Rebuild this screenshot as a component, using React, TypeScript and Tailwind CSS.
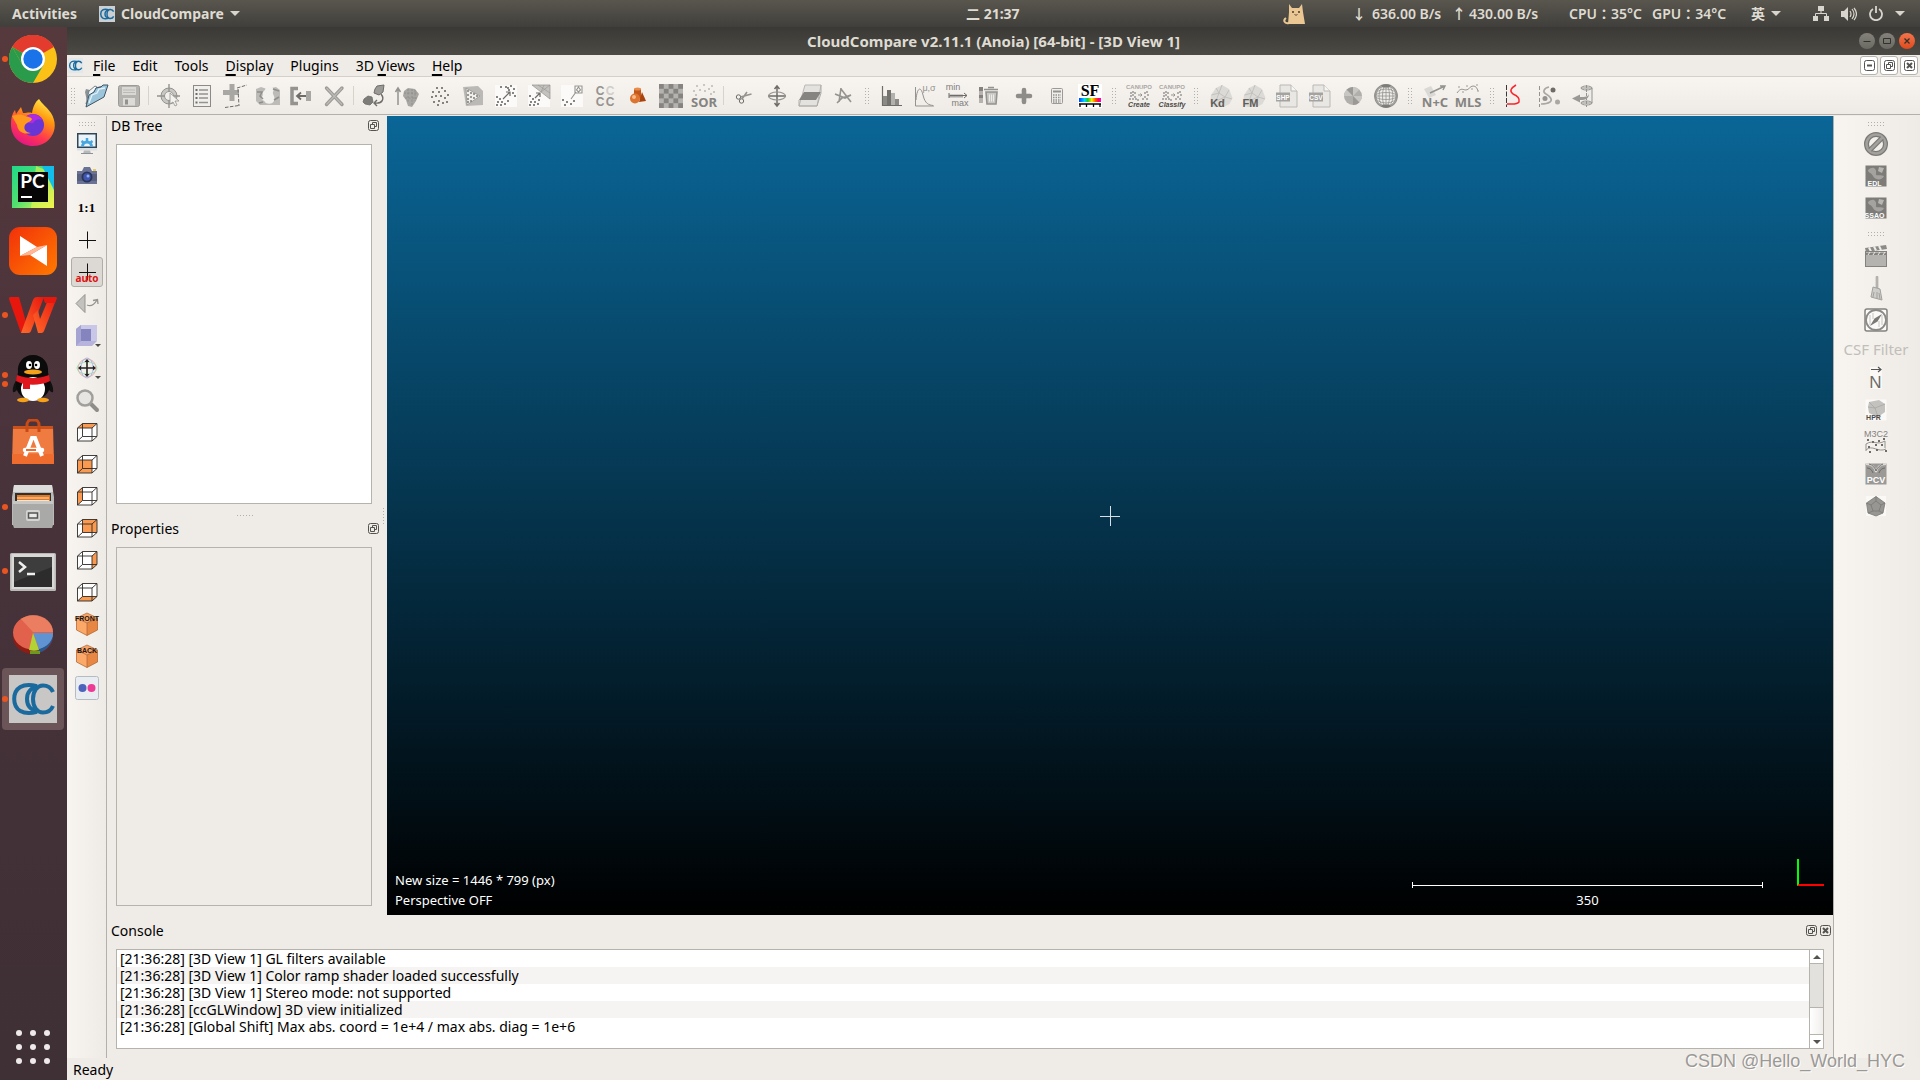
import React from "react";

type Kids = { children?: React.ReactNode };

const G = "#94938f";
const L = "#c9c7c3";
const D = "#6d6c69";

function Ic({ children, size = 24 }: Kids & { size?: number }) {
  return (
    <svg width={size} height={size} viewBox="0 0 24 24" fill="none" aria-hidden="true" className="block shrink-0 overflow-visible">
      {children}
    </svg>
  );
}

function T({ x = 12, y, s, f = G, children, font = "Liberation Sans", w = "bold", i = false }: Kids & { x?: number; y: number; s: number; f?: string; font?: string; w?: string; i?: boolean }) {
  return (
    <text x={x} y={y} fontSize={s} fill={f} textAnchor="middle" fontWeight={w} fontStyle={i ? "italic" : "normal"} fontFamily={`"${font}", sans-serif`}>
      {children}
    </text>
  );
}

function Dots({ pts, r = 1, f = D }: { pts: number[][]; r?: number; f?: string }) {
  return (
    <>
      {pts.map(([x, y], i) => (
        <rect key={i} x={x - r} y={y - r} width={r * 2} height={r * 2} fill={f} />
      ))}
    </>
  );
}

function CCLogo({ size, bg, sw = 2.2 }: { size: number; bg: string; sw?: number }) {
  return (
    <Ic size={size}>
      <rect width="24" height="24" fill={bg} />
      <path d="M14 5.600C7 3.600 2.600 6.500 2.600 12s4.400 8.400 11.400 6.400" stroke="#1b6a9e" strokeWidth={sw} />
      <path d="M14.500 6.500C11 6 9 8.500 9 12s2 6 5.500 5.500" stroke="#1b6a9e" strokeWidth={sw} />
      <path d="M22 8.500C21 6.200 19 5.200 17 5.200c-3 0-5 3-5 6.800s2 6.800 5 6.800c2 0 4-1 5-3.300" stroke="#1b6a9e" strokeWidth={sw} />
    </Ic>
  );
}

/* ---------- top toolbar icons ---------- */

const SCATTER = [[9, 4], [14, 4], [5, 8], [11, 8], [17, 7], [20, 11], [4, 13], [8, 12], [13, 12], [17, 14], [6, 18], [11, 17], [15, 19], [19, 18], [10, 21]];

const Stone = ({ label }: { label: string }) => (
  <Ic>
    <path d="M1 19 2 11 7 4l6-3 7 4 3.500 9-3 6-6 3H5z" fill="#dcdad6" />
    <path d="M7 4l3 5 3-8M2.500 11 10 9l6 4 7 2M16 13l4-7M10 9l-3 8 9-4-2 10" stroke="#bdbbb7" strokeWidth=".8" />
    <T x={8.500} y={23} s={11} f="#5f5e5b">{label}</T>
  </Ic>
);

const FileIc = ({ label }: { label: string }) => (
  <Ic>
    <path d="M5 1h11l6 6v16H5z" fill="#e9e7e3" stroke="#bbb9b5" />
    <path d="M16 1v6h6" fill="#f7f6f3" stroke="#bbb9b5" />
    <rect x="1" y="8.500" width="14" height="9" fill="#a5a3a0" />
    <T x={8} y={15.500} s={6.500} f="#fff">{label}</T>
  </Ic>
);

const Canupo = ({ label }: { label: string }) => (
  <Ic>
    <T y={5} s={6} f="#a8a6a3">CANUPO</T>
    <Dots pts={[[4, 9], [6, 8], [8, 9], [4, 12], [6, 11], [8, 13], [3, 15], [6, 15], [9, 15], [11, 16], [18, 9], [20, 8], [21, 11], [18, 13], [16, 15], [20, 15]]} r={0.8} f="#8b8a87" />
    <path d="M11 11h4m-1.500-1.500L15 11l-1.500 1.500" stroke={G} />
    <T y={22.500} s={7} f="#4a4947" i>{label}</T>
  </Ic>
);

const I: Record<string, React.ReactNode> = {
  Open: (
    <Ic>
      <path d="M1 8 2 5l4 1 5-4 2 1 8-2 2 1-3 9L4 22z" fill="#8a9297" />
      <path d="M2 20 5 7l6-5 2 1-6 10z" fill="#f2f6f8" stroke="#5c6468" strokeWidth=".7" />
      <path d="M2 23 5 11l5-3 2-4 5-1 2-2h5l-4 12z" fill="#9cc5dc" stroke="#3d5563" strokeWidth="1" />
      <path d="M5 19 8 11l5-2 2-4 6-1" stroke="#e4f2f9" strokeWidth="1.300" />
    </Ic>
  ),
  Save: (
    <Ic>
      <rect x="1.500" y="1.500" width="21" height="21" rx="2" fill="#b5b3b0" stroke="#9d9b98" />
      <rect x="5" y="3" width="14" height="8" fill="#dad8d4" />
      <path d="M6 6h12M6 8.500h12" stroke="#bcbab6" />
      <rect x="6" y="14" width="12" height="7.500" fill="#dddbd8" />
      <rect x="8" y="15.500" width="3" height="5" fill="#94928f" />
    </Ic>
  ),
  "Pick point": (
    <Ic>
      <circle cx="12" cy="12" r="6" stroke={L} strokeWidth="4" />
      <circle cx="12" cy="12" r="8" stroke={G} />
      <circle cx="12" cy="12" r="4.500" stroke={G} strokeWidth=".8" />
      <path d="M12 0v8M12 16v8M0 12h8M16 12h7" stroke={G} strokeWidth="1.400" />
      <path d="M13 9v11l3-2 2 4 2-1-2-4h4z" fill="#f4f2ef" stroke={G} strokeWidth=".8" />
    </Ic>
  ),
  "Properties list": (
    <Ic>
      <rect x="3.500" y="1.500" width="17" height="21" fill="#f1efec" stroke="#8b8a87" />
      <path d="M9 6h9M9 10h9M9 14h9M9 18.500h9" stroke={G} strokeWidth="1.400" />
      <path d="M5.500 6h2M5.500 10h2M5.500 14h2M5.500 18.500h2" stroke={D} strokeWidth="1.800" />
    </Ic>
  ),
  "Add point": (
    <Ic>
      <path d="M9 0v17M0 8.500h16" stroke="#a9a7a4" strokeWidth="5" />
      <path d="M14 4l10-3M15 5l1 17M2 23.500l14-2" stroke={D} strokeDasharray="3.500 1.500" />
    </Ic>
  ),
  Clone: (
    <Ic>
      <path d="M0 5 5 3l6 2 9-2 4 3v15H4l-4-4z" fill="#bdbbb8" />
      <path d="M9 6c0-3 3-4 6-3s3 3 2 5 3 5 1 9-8 3-9 1-5-2-3-5-1-4 3-7z" fill="#f3f1ee" />
      <path d="M1 8h5l-2 4 3 3M17 5l6 2M18 16l5-3M3 19l4-1" stroke="#8f8e8b" strokeWidth="1.500" />
    </Ic>
  ),
  Merge: (
    <Ic>
      <path d="M9 4.500H3v15h6" stroke={G} strokeWidth="3.500" />
      <path d="M19 12H8m4-3.500L8 12l4 3.500" stroke={D} strokeWidth="1.800" />
      <rect x="17" y="7" width="5" height="10" fill="#a9a7a4" />
    </Ic>
  ),
  Delete: (
    <Ic>
      <path d="M4.500 4 20 20.500M20 4 4.500 20.500" stroke="#9c9a97" strokeWidth="3.400" strokeLinecap="round" />
      <path d="M4.500 4 20 20.500M20 4 4.500 20.500" stroke="#bcbab7" strokeWidth="1.200" />
    </Ic>
  ),
  Register: (
    <Ic>
      <path d="M13 5l2-3 7-1-1 7-4 3-5-2z" fill="#9b9a97" stroke={D} strokeWidth="1" />
      <path d="M2 15l4-3 4 1 1 5-3 3-5-1-2-2z" fill="#7d7c79" stroke={D} strokeWidth=".8" />
      <path d="M19 10c4 5 1 10-6 9m2-3-3 3 3 3" stroke={D} strokeWidth="1.400" />
    </Ic>
  ),
  Align: (
    <Ic>
      <path d="M3 21V4M.5 8 3 4l2.500 4" stroke={G} strokeWidth="1.500" />
      <path d="M9 7l4-3 7 1 4 5-3 7-4 6-4-1-2-6-3-4z" fill="#a8a6a3" />
      <path d="M9 9h14M13 5v14M17 5v16M20 6v11M10 14h12" stroke="#8d8c89" strokeDasharray="2 1.500" strokeWidth=".9" />
    </Ic>
  ),
  Subsample: <Ic><Dots pts={SCATTER} f="#83827f" /></Ic>,
  "Sample points": (
    <Ic>
      <path d="M2 3l15-1 5 5v14l-17 1z" fill="#bbb9b5" />
      <path d="M5 4l14 8L6 21z" fill="#f1efec" stroke={G} strokeWidth=".8" />
      <Dots pts={[[7, 7], [7, 11], [7, 15], [7, 18], [10, 9], [10, 13], [10, 17], [13, 10], [13, 14], [16, 12]]} r={0.8} f={D} />
    </Ic>
  ),
  "Cloud distance": (
    <Ic>
      <rect x="1" y="1" width="22" height="22" fill="#fbfaf8" />
      <Dots pts={[[7, 3], [12, 3], [17, 2], [20, 5], [15, 6], [19, 9], [21, 12], [14, 4], [3, 13], [6, 15], [4, 18], [8, 18], [11, 20], [7, 21], [3, 21], [14, 17]]} f="#868582" />
      <path d="M9 15l7-7m-4 0h4v4" stroke={D} strokeWidth="1.200" />
    </Ic>
  ),
  "Mesh distance": (
    <Ic>
      <rect x="1" y="1" width="22" height="22" fill="#fbfaf8" />
      <path d="M5 1h18v14z" fill="#c4c2be" stroke={G} strokeWidth=".7" />
      <path d="M11 1l12 8M17 1l-3 7 9-7" stroke={G} strokeWidth=".6" />
      <Dots pts={[[3, 12], [6, 15], [4, 18], [8, 18], [11, 20], [7, 21], [3, 21], [12, 16]]} f="#868582" />
      <path d="M8 14l5-5m-4 0h4v4" stroke={D} strokeWidth="1.200" />
    </Ic>
  ),
  "Closest point": (
    <Ic>
      <rect x="1" y="1" width="22" height="22" fill="#fbfaf8" />
      <path d="M15 2h7v7h-7zM18.500 3l2 3-2 2-2-2zM16 8l-5 7" stroke={G} strokeWidth="1.100" />
      <Dots pts={[[3, 16], [7, 18], [5, 21], [11, 20], [14, 17]]} f="#868582" />
    </Ic>
  ),
  "Connected components": (
    <Ic>
      <T x={7} y={10.500} s={12} f="#94938f">C</T>
      <T x={17} y={10.500} s={12} f="#d0cecb">C</T>
      <T x={7} y={21.500} s={12}>C</T>
      <T x={17} y={21.500} s={12}>C</T>
    </Ic>
  ),
  Primitives: (
    <Ic>
      <path d="M8 5h7v9H8z" fill="#c2571c" />
      <ellipse cx="11.500" cy="5" rx="3.500" ry="1.500" fill="#e98c4a" />
      <path d="M16 8l4 9-7 1z" fill="#a8430f" />
      <circle cx="9" cy="14.500" r="5" fill="#dd7430" />
      <circle cx="8" cy="13" r="2" fill="#f6b98a" />
    </Ic>
  ),
  Rasterize: (
    <Ic>
      <rect width="24" height="24" fill="#b5b3b0" />
      {Array.from({ length: 13 }).map((_, n) => {
        const k = n * 2;
        return <rect key={n} x={(k % 5) * 4.8} y={Math.floor(k / 5) * 4.8} width="4.800" height="4.800" fill="#858481" />;
      })}
    </Ic>
  ),
  SOR: (
    <Ic>
      <T y={23} s={13} f="#858481" font="Noto Sans">SOR</T>
      <Dots pts={[[2, 7], [5, 2], [8, 6], [12, 1], [13, 7], [17, 5], [20, 2], [22, 8], [4, 11], [19, 10]]} r={0.8} f="#b0aeab" />
    </Ic>
  ),
  Segment: (
    <Ic>
      <circle cx="6.500" cy="13" r="2.200" stroke={D} />
      <circle cx="9.500" cy="17" r="2.200" stroke={D} />
      <path d="M8.500 13l11-3M10 15l5-7" stroke={G} strokeWidth="1.600" />
    </Ic>
  ),
  Translate: (
    <Ic>
      <path d="M12 2v20M3 12h18M9.500 5 12 2l2.500 3M9.500 19l2.500 3 2.500-3" stroke={D} strokeWidth="1.500" />
      <ellipse cx="12" cy="12" rx="8.500" ry="4" stroke={G} strokeWidth="1.200" />
    </Ic>
  ),
  "Cross section": (
    <Ic>
      <path d="M7 1h16l-4 21H1z" fill="#e4e2de" stroke="#bab8b4" />
      <path d="M6 8h17l-5 8H1z" fill="#858481" />
      <path d="M1 16v6h18l4-13V1" stroke="#aeaca9" />
    </Ic>
  ),
  Polyline: (
    <Ic><path d="M10 4 8 18M4 10l10 4 6-3-9 3-5 5M10 5l10 13" stroke={G} strokeWidth="1.600" /></Ic>
  ),
  Histogram: (
    <Ic>
      <path d="M2.500 2v19.500H22" stroke={D} strokeWidth="1.200" />
      <path d="M3 12h4v9H3zM15 15h4v6h-4z" fill="#8b8a87" />
      <path d="M7 6h4v15H7z" fill="#73726f" />
      <path d="M11 9h4v12h-4z" fill="#b3b1ae" />
    </Ic>
  ),
  Statistics: (
    <Ic>
      <path d="M2.500 3v19H21" stroke={G} />
      <path d="M3 16C4 3 8 2 10 11s6 10 10 10.500" stroke={G} />
      <T x={16} y={7} s={9} w="normal">μ,σ</T>
    </Ic>
  ),
  "Min max": (
    <Ic>
      <T x={7} y={6} s={9} w="normal" f="#7d7c79">min</T>
      <path d="M3 12h14" stroke="#a9a7a4" strokeWidth="3" />
      <path d="M3 9v5M4 11.500h17m-3-2.500 3 2.500-3 2.500" stroke={D} />
      <T x={14} y={22} s={9} w="normal" f="#7d7c79">max</T>
    </Ic>
  ),
  "Delete scalar field": (
    <Ic>
      <path d="M0 3h4v16H0z" fill="#b5b3b0" />
      <path d="M0 3h4v4H0zM0 11h4v3H0z" fill="#83827f" />
      <path d="M5 5.500h14M9 3.500h6M7 8h11l-1 12H8z" stroke={G} strokeWidth="1.600" fill="#c9c7c3" />
      <path d="M10.500 10.500v7M12.500 10.500v7M14.500 10.500v7" stroke="#f1efec" strokeWidth=".9" />
    </Ic>
  ),
  "Add scalar field": (
    <Ic><path d="M12 6v12M6 12h12" stroke="#8d8c89" strokeWidth="4.600" strokeLinecap="round" /></Ic>
  ),
  Calculator: (
    <Ic>
      <rect x="6.500" y="4.500" width="11" height="15" rx="1" fill="#f1efec" stroke="#9c9a97" />
      <path d="M8 7.500h8" stroke={G} strokeWidth="2" />
      <path d="M8 11h8M8 13.500h8M8 16h8M8 18h8" stroke="#94938f" strokeDasharray="1.500 1" strokeWidth="1.300" />
    </Ic>
  ),
  "Scalar field": (
    <Ic>
      <defs>
        <linearGradient id="hue"><stop offset="0" stopColor="#003cff" /><stop offset=".25" stopColor="#00d8ff" /><stop offset=".4" stopColor="#1fc92c" /><stop offset=".58" stopColor="#ffef00" /><stop offset=".75" stopColor="#ff5a00" /><stop offset=".9" stopColor="#ff0060" /><stop offset="1" stopColor="#ff00f0" /></linearGradient>
      </defs>
      <rect width="24" height="24" fill="#fff" />
      <T y={12} s={16} f="#000" font="Liberation Serif">SF</T>
      <rect x="1" y="14" width="22" height="4" fill="url(#hue)" />
      <path d="M1 20h22M2 20v3M8.500 20v3M15.500 20v3M22 20v3" stroke="#000" strokeWidth="1.300" />
    </Ic>
  ),
  "CANUPO create": <Canupo label="Create" />,
  "CANUPO classify": <Canupo label="Classify" />,
  "Kd facets": <Stone label="Kd" />,
  "FM facets": <Stone label="FM" />,
  "Export SHP": <FileIc label="SHP" />,
  "Export CSV": <FileIc label="CSV" />,
  "Colour wheel": (
    <Ic>
      <circle cx="12" cy="12" r="9" fill="#b1afac" />
      <path d="M12 12 3 12a9 9 0 0 1 2.600-6.400zM12 12V3a9 9 0 0 1 6.400 2.600zM12 12h9a9 9 0 0 1-2.600 6.400z" fill="#c8c6c3" />
      <path d="M12 12v9a9 9 0 0 0 6.400-2.600zM12 12 5.600 5.600A9 9 0 0 1 12 3z" fill="#9a9996" />
    </Ic>
  ),
  Stereogram: (
    <Ic>
      <circle cx="12" cy="12" r="11.300" fill="#efedea" stroke={G} strokeWidth="1.200" />
      {[3.5, 7, 10].map((r) => (
        <g key={r} stroke="#94938f" strokeWidth=".8">
          <ellipse cx="12" cy="12" rx={r} ry="11" />
          <ellipse cx="12" cy="12" rx="11" ry={r} />
        </g>
      ))}
      <path d="M12 1v22M1 12h22" stroke={G} strokeWidth=".8" />
      <path d="M7 1.500a12 12 0 0 1 10 0l-2 2H9zM7 22.500a12 12 0 0 0 10 0l-2-2H9z" fill="#7d7c79" />
    </Ic>
  ),
  "Normals and curvature": (
    <Ic>
      <path d="M1 5l7-3 5 9-7 3z" fill="#dbd9d5" />
      <path d="M7 9 22 2m-5 0h5l-2 4" stroke={G} strokeWidth="1.400" />
      <T y={23} s={13} f="#858481" font="Noto Sans">N+C</T>
    </Ic>
  ),
  MLS: (
    <Ic>
      <path d="M1 9c4-6 6-3 9-3s4-4 7-4 4 2 5 5" stroke={G} />
      <Dots pts={[[3, 3], [7, 8], [11, 2], [16, 5], [21, 1], [22, 7]]} r={0.8} f="#b0aeab" />
      <T y={23} s={13} f="#858481" font="Noto Sans">MLS</T>
    </Ic>
  ),
  "Surface of revolution": (
    <Ic>
      <path d="M1.500 1v22" stroke="#3a3937" strokeDasharray="5 1.500" />
      <path d="M11 1C6 4 4 7 8 10c5 2 7 4 6 8-2 3-7 2-12 2" stroke="#f8252c" strokeWidth="1.500" />
    </Ic>
  ),
  "Profile from cloud": (
    <Ic>
      <path d="M1.500 2v21" stroke={G} strokeDasharray="4 2" />
      <path d="M11 3C6 4 4 8 8 10s7 6 4 8-5 2-9 2" stroke="#a9a7a4" strokeWidth="1.600" />
      <circle cx="15" cy="6" r="2.500" fill={D} /><circle cx="7" cy="14.500" r="2.500" fill={G} /><circle cx="19.500" cy="18" r="2.500" fill="#a9a7a4" />
    </Ic>
  ),
  Unroll: (
    <Ic>
      <path d="M10 4h11v15H10" fill="#efedea" stroke={G} />
      <ellipse cx="15.500" cy="4" rx="5.500" ry="2" stroke={G} /><ellipse cx="15.500" cy="19" rx="5.500" ry="2" stroke={G} />
      <path d="M15.500 1v22" stroke={G} strokeDasharray="3 1" />
      <path d="M18 9c0 4-4 4-9 4v-2.500L1 14.500l8 4V16c6 0 9-1 9-7z" fill="#9a9996" />
    </Ic>
  ),
};

const TOOLBAR = [
  "#handle", "Open", "Save", "#sep", "Pick point", "Properties list", "Add point", "Clone", "Merge", "Delete", "#sep",
  "Register", "Align", "Subsample", "Sample points", "Cloud distance", "Mesh distance", "Closest point", "Connected components", "Primitives", "Rasterize", "SOR", "#sep",
  "Segment", "Translate", "Cross section", "Polyline", "#handle",
  "Histogram", "Statistics", "Min max", "Delete scalar field", "Add scalar field", "Calculator", "Scalar field", "#handle",
  "CANUPO create", "CANUPO classify", "#handle",
  "Kd facets", "FM facets", "Export SHP", "Export CSV", "Colour wheel", "Stereogram", "#handle",
  "Normals and curvature", "MLS", "#handle", "Surface of revolution", "Profile from cloud", "Unroll",
];

/* ---------- left toolbar icons ---------- */

const FACES: Record<string, string> = {
  Top: "M2.500 8 7.500 3.500H22L17 8z",
  Front: "M2.500 8H17v13H2.500z",
  Left: "M2.500 8l5-4.500v13L2.500 21z",
  Back: "M7.500 3.500H22v13H7.500z",
  Right: "M17 8l5-4.500v13L17 21z",
  Bottom: "M2.500 21l5-4.500H22L17 21z",
};

const Cube = ({ face }: { face: string }) => (
  <Ic>
    <path d="M7.500 3.500H22v13L17 21H2.500V8z" fill="#fff" />
    <path d={FACES[face]} fill="#f99a50" />
    <path d="M2.500 8H17v13H2.500zM7.500 3.500H22v13H7.500zM2.500 8l5-4.500M17 8l5-4.500M2.500 21l5-4.500M17 21l5-4.500" stroke="#2e2a28" strokeWidth=".9" />
  </Ic>
);

const IsoCube = ({ label }: { label: string }) => (
  <Ic>
    <path d="M12 1l10.500 5v12L12 23.500 1.500 18V6z" fill="#f7a266" />
    <path d="M12 11l10.500-5v12L12 23.500z" fill="#e88643" />
    <path d="M12 11 1.500 6v12L12 23.500z" fill="#fba869" />
    <path d="M12 11v12.500M12 11 1.500 6M12 11l10.500-5M12 1l10.500 5v12L12 23.500 1.500 18V6z" stroke="#a96536" strokeWidth=".7" />
    <T y={9} s={7} f="#1b1410">{label}</T>
  </Ic>
);

const LEFT: [string, React.ReactNode][] = [
  ["Display settings", (
    <Ic key="a">
      <path d="M2 1h20v15H2z" fill="#2f4858" /><path d="M3.500 2.500h17v12h-17z" fill="#eaf4fa" />
      <path d="M6 14.500a6 6 0 0 1 12 0h-3a3 3 0 0 0-6 0z" fill="#49a7e0" />
      <path d="M12 6v3M6.500 9l2.500 2M17.500 9 15 11" stroke="#49a7e0" strokeWidth="2.500" />
      <path d="M2 16h20v2.500H2z" fill="#dcdfe1" /><path d="M9 18.500h6l1 3H8z" fill="#b5babd" /><path d="M6 21.500h12" stroke="#8c9194" />
    </Ic>
  )],
  ["Screenshot", (
    <Ic key="b">
      <path d="M2 7h5l2-4h6l2 4h5v13H2z" fill="#6a7396" /><path d="M2 10h20v7H2z" fill="#57607f" />
      <circle cx="12" cy="13" r="5.500" fill="#2d3557" /><circle cx="12" cy="13" r="3.700" fill="#3f55b0" /><circle cx="13" cy="12" r="1.500" fill="#8fb0f0" />
      <rect x="18" y="5" width="3" height="2" fill="#e5cb5a" />
    </Ic>
  )],
  ["Zoom 1:1", <span key="c" className="font-['Liberation_Serif',serif] text-[13px] font-bold text-black">1:1</span>],
  ["Pick rotation center", <Ic key="d"><path d="M12.500 3.500v17M4 12.500h17" stroke="#111" /></Ic>],
  ["Auto pick rotation center", (
    <Ic key="e"><path d="M12.500 3.500v17M4 12.500h17" stroke="#111" /><T y={22} s={10} f="#e01414" font="Noto Sans">auto</T></Ic>
  )],
  ["Level", (
    <Ic key="f">
      <path d="M10 2.500v18L1 11.500z" fill="#c4c2be" stroke={G} />
      <path d="M12 13c4 2 7 0 10-5M18 8.500l4.500-1L23 12" stroke={G} strokeWidth="1.300" />
    </Ic>
  )],
  ["Render mode", (
    <Ic key="g">
      <path d="M1 5l5-4h16v16l-5 5H1z" fill="#b6b4dc" /><path d="M6 1h16v16H6z" fill="#c8c7e8" /><path d="M6 5h10v12H6z" fill="#8684bf" /><path d="M1 5l5-4v16l-5 5z" fill="#a5a3d2" />
    </Ic>
  )],
  ["Pivot visibility", (
    <Ic key="h">
      <circle cx="12" cy="12" r="9" stroke="#e8a9a9" /><ellipse cx="12" cy="12" rx="10" ry="6" stroke="#a9e0b4" /><ellipse cx="12" cy="12" rx="6" ry="10" stroke="#a9bfe8" />
      <path d="M12 5v14M5 12h14" stroke="#222" strokeWidth="1.600" />
      <path d="M9.500 6 12 3l2.500 3zM9.500 18l2.500 3 2.500-3zM6 9.500 3 12l3 2.500zM18 9.500l3 2.500-3 2.500z" fill="#222" />
    </Ic>
  )],
  ["Zoom", (
    <Ic key="i">
      <path d="M16 16l6 6" stroke="#8e8d8a" strokeWidth="4" strokeLinecap="round" /><circle cx="10" cy="10" r="7.500" fill="#e6e5e2" stroke="#a19f9c" strokeWidth="2.500" />
    </Ic>
  )],
  ...Object.keys(FACES).map((f): [string, React.ReactNode] => [`${f} view`, <Cube key={f} face={f} />]),
  ["Front isometric view", <IsoCube key="j" label="FRONT" />],
  ["Back isometric view", <IsoCube key="k" label="BACK" />],
  ["Stereo mode", (
    <Ic key="l">
      <rect x=".5" y=".5" width="23" height="23" rx="2" fill="#e9edf1" stroke="#b4bcc3" /><circle cx="7.500" cy="12" r="4" fill="#4b63bb" /><circle cx="16.500" cy="12" r="4" fill="#ed3a94" />
    </Ic>
  )],
];

/* ---------- right toolbar icons ---------- */

const Shader = ({ label }: { label: string }) => (
  <Ic>
    <rect x="1.500" y="1.500" width="21" height="21" fill="#7d7c79" />
    <path d="M4 6c5-5 9-1 8 3s4 1 8 3c-2 5-9 4-11 0S4 9 4 6z" fill="#a5a3a0" />
    <path d="M15 3l5 1-2 5-4-2z" fill="#b8b6b3" />
    <T x={10.500} y={21.500} s={7} f="#fff">{label}</T>
  </Ic>
);

const RIGHT_A: [string, React.ReactNode][] = [
  ["Disable filter", (
    <Ic key="a">
      <circle cx="12" cy="12" r="9.500" stroke="#7a7976" strokeWidth="5" /><circle cx="12" cy="12" r="9.500" stroke="#a3a19e" strokeWidth="2.500" />
      <path d="M6 18 18 6" stroke="#7a7976" strokeWidth="5" /><path d="M5 19 19 5" stroke="#a3a19e" strokeWidth="2.500" />
    </Ic>
  )],
  ["EDL shader", <Shader key="b" label="EDL" />],
  ["SSAO shader", <Shader key="c" label="SSAO" />],
];

const RIGHT_B: [string, React.ReactNode][] = [
  ["Animation", (
    <Ic key="a">
      <path d="M1 4l21-3 1 4L2 8z" fill="#8b8a87" /><path d="M5 3.500l2 4M10 2.500l2 4M15 2l2 4" stroke="#eeece8" strokeWidth="2" />
      <rect x="1.500" y="7.500" width="21" height="15" fill="#b5b3b0" stroke="#83827f" /><path d="M2 10h20" stroke="#83827f" strokeWidth="2" /><path d="M6 8l-2 3M11 8 9 11M16 8l-2 3M21 8l-2 3" stroke="#eeece8" />
    </Ic>
  )],
  ["Broom", (
    <Ic key="b"><path d="M12 .5h2V12h-2z" fill="#bcbab7" stroke="#a3a19e" strokeWidth=".6" /><path d="M9 11l7 2 2 11-11-3z" fill="#cfcdca" stroke="#a3a19e" /><path d="M10 16l-1 5M13 16v7M15 17l1 6" stroke="#a3a19e" /></Ic>
  )],
  ["Compass", (
    <Ic key="c">
      <rect x="1" y="1" width="22" height="22" rx="2" fill="#fbfaf8" stroke="#83827f" strokeWidth="1.500" /><circle cx="12" cy="12" r="10" stroke="#8b8a87" strokeWidth="1.800" />
      <path d="M6 7v10M9 5v6M15 13v6M18 7v10" stroke="#d0ceca" strokeWidth="1.200" /><path d="M18 6l-4.500 7.500L6 18l4.500-7.500z" fill="#7a7976" />
    </Ic>
  )],
  ["CSF Filter", <span key="d" className="text-[15px] text-[#c1beba]">CSF Filter</span>],
  ["Normals", (
    <Ic key="e"><path d="M6 1h12v22H6z" fill="#faf9f6" /><path d="M7 3.500h10M14 1l3 2.500L14 6" stroke="#555" strokeWidth="1.200" /><T x={11.500} y={22} s={17} f="#6d6c69" font="Liberation Sans" w="normal">N</T></Ic>
  )],
  ["Hidden point removal", (
    <Ic key="f"><rect x="1.500" y="1.500" width="21" height="21" fill="#fbfaf8" /><path d="M5 4l10-2 6 4v8l-7 5-9-4-1-6z" fill="#c4c2be" /><path d="M5 4l6 6 10-4M11 10l3 9M4 9l7 1" stroke="#a9a7a4" strokeWidth=".8" /><T x={9.500} y={22} s={7} f="#4c4b49">HPR</T></Ic>
  )],
  ["M3C2", (
    <Ic key="g"><T y={7} s={9} w="normal" f="#83827f">M3C2</T><path d="M2 14c8-5 10 2 19-3M2 20c6-6 12 3 20-1M2 14v7M21 11v7" stroke={G} /><Dots pts={[[4, 10], [9, 12], [15, 11], [20, 9], [5, 17], [12, 15], [18, 15], [6, 22], [13, 20], [22, 21]]} /></Ic>
  )],
  ["PCV", (
    <Ic key="h"><rect x="1.500" y="1.500" width="21" height="21" fill="#9a9996" /><path d="M2 2c5 0 9 3 10 8 1-5 5-8 10-8" stroke="#dddbd8" strokeWidth="2" /><path d="M5 2c4 1 6 4 7 7 1-3 4-6 7-7M3 6c3 0 5 2 6 5M21 6c-3 0-5 2-6 5" stroke="#6d6c69" /><T y={21} s={9} f="#fff">PCV</T></Ic>
  )],
  ["Poisson", (
    <Ic key="i"><rect x="2" y="2" width="20" height="20" fill="#faf9f6" /><path d="M12 2.500 21 9l-2 10-7 3-8-3L2.500 9z" fill="#979693" stroke="#7a7976" strokeWidth=".8" /><path d="M12 7l5 4-2 6H9l-2-6zM12 7V2.500M17 11l4-2M15 17l4 2M9 17l-5 2M7 11 2.500 9" stroke="#7a7976" strokeWidth=".8" /></Ic>
  )],
];

/* ---------- dock ---------- */

const S48 = ({ children }: Kids) => (
  <svg width="48" height="48" viewBox="0 0 48 48" fill="none" aria-hidden="true" className="block">{children}</svg>
);

const DOCK: { name: string; dots: number; active?: boolean; icon: React.ReactNode }[] = [
  {
    name: "Chrome", dots: 1, icon: (
      <S48>
        <circle cx="24" cy="24" r="24" fill="#fbc116" />
        <path d="M24 24 3.200 12A24 24 0 0 1 44.800 12z" fill="#e33b2e" />
        <path d="M24 12h20.800A24 24 0 0 0 3.200 12z" fill="#e33b2e" />
        <path d="M3.200 12A24 24 0 0 0 24 48l10.400-18H24L13.600 30z" fill="#2a9a4b" />
        <path d="M24 24 13.600 30 3.200 12z" fill="#2a9a4b" />
        <circle cx="24" cy="24" r="12" fill="#fff" /><circle cx="24" cy="24" r="9.700" fill="#1a73e8" />
      </S48>
    ),
  },
  {
    name: "Firefox", dots: 0, icon: (
      <S48>
        <defs>
          <linearGradient id="ff" x1=".8" y1="0" x2=".3" y2="1"><stop offset="0" stopColor="#fff44f" /><stop offset=".35" stopColor="#ff980e" /><stop offset=".7" stopColor="#ff3750" /><stop offset="1" stopColor="#e31587" /></linearGradient>
        </defs>
        <path d="M30 0c3 5 8 8 12 14 5 8 5 17 0 24-4 6-11 9-18 9C12 47 2 38 2 26c0-7 1-11 4-15l1 4 5-7 2 6c4 0 6-1 9 0 1-6 3-11 7-14z" fill="url(#ff)" />
        <circle cx="24" cy="26" r="11" fill="#6a35d5" /><path d="M15 20c4-6 14-7 19 1-5-2-8 0-9 2s-7 2-10-3z" fill="#b02ae0" />
        <path d="M3 17c6-2 10-2 13 0 3 1 6 1 7 3-1 3-5 3-7 6-2 4 1 8 6 8-7 2-13-1-14-8z" fill="#ff9a1f" />
      </S48>
    ),
  },
  {
    name: "PyCharm", dots: 0, icon: (
      <S48>
        <defs><linearGradient id="pc" x2="1" y2="1"><stop offset="0" stopColor="#21d789" /><stop offset=".5" stopColor="#50e070" /><stop offset="1" stopColor="#fcf84a" /></linearGradient></defs>
        <rect x="3" y="3" width="42" height="42" fill="url(#pc)" /><path d="M27 3l14 6 4 20v16H22z" fill="#e9f34c" opacity=".6" /><path d="M33 3h12v24z" fill="#12bdea" />
        <rect x="9" y="9" width="30" height="30" fill="#060606" />
        <T x={23.500} y={25} s={19} f="#fff" font="Lato">PC</T><path d="M12 34h11" stroke="#fff" strokeWidth="2" />
      </S48>
    ),
  },
  {
    name: "Xmind", dots: 0, icon: (
      <S48>
        <defs><linearGradient id="xm" x2="1" y2="1"><stop offset="0" stopColor="#f2300a" /><stop offset="1" stopColor="#ff7a00" /></linearGradient></defs>
        <rect width="48" height="48" rx="11" fill="url(#xm)" />
        <path d="M11 9l17 11-17 9z" fill="#fff" /><path d="M38 18v21L21 28z" fill="#fff" /><path d="M28 20l10-2-17 10-10 1z" fill="#ffb999" />
      </S48>
    ),
  },
  {
    name: "WPS Office", dots: 1, icon: (
      <S48>
        <defs><linearGradient id="wp" x1="0" x2="1" y1="1" y2="0"><stop offset="0" stopColor="#ff6a2a" /><stop offset="1" stopColor="#e8170e" /></linearGradient></defs>
        <path d="M0 8c0-2 1-2 3-2h7l7 25-5 11z" fill="#e8170e" />
        <path d="M12 42 24 9c1-2 2-3 4-3h7L22 40c-1 2-2 2-4 2z" fill="url(#wp)" />
        <path d="M24 24l5-5 2 9L39 9c1-2 2-3 4-3h3c2 0 2 1 1 3L35 40c-1 2-2 2-4 2h-2z" fill="url(#wp)" />
        <path d="M34 6h12c2 0 2 1 1 3l-1 3H36z" fill="#e8170e" />
      </S48>
    ),
  },
  {
    name: "QQ", dots: 2, icon: (
      <S48>
        <path d="M9 22c-3 5-6 10-5 15 2 1 4-2 5-4zM39 22c3 5 6 10 5 15-2 1-4-2-5-4z" fill="#111" />
        <path d="M24 0c10 0 16 8 15 17l2 13c0 8-7 15-17 15S7 38 7 30l2-13C8 8 14 0 24 0z" fill="#0b0b0b" />
        <ellipse cx="24" cy="34" rx="12" ry="12" fill="#fff" /><path d="M8 20c10 4 22 4 32 0l1 6c-10 5-24 5-34 0z" fill="#e0171c" /><path d="M14 26h7v8h-7z" fill="#e0171c" />
        <ellipse cx="20" cy="10" rx="3" ry="4" fill="#fff" /><ellipse cx="28" cy="10" rx="3" ry="4" fill="#fff" /><circle cx="21" cy="10" r="1.300" fill="#000" /><circle cx="27" cy="10" r="1.300" fill="#000" />
        <ellipse cx="24" cy="17" rx="9" ry="2.500" fill="#f6a11b" /><ellipse cx="14" cy="45" rx="6" ry="2.200" fill="#f6a11b" /><ellipse cx="34" cy="45" rx="6" ry="2.200" fill="#f6a11b" />
      </S48>
    ),
  },
  {
    name: "Ubuntu Software", dots: 0, icon: (
      <S48>
        <path d="M18 11V6c0-3 2-5 4-5h4c2 0 4 2 4 5v5" stroke="#c84a16" strokeWidth="3" />
        <path d="M4 7h40l1 38H3z" fill="#f07b41" /><path d="M4 7h40v3H4z" fill="#c9511c" /><path d="M3 35h42v10H3z" fill="#ee6c2e" />
        <path d="M18 13V8M30 13V8" stroke="#c84a16" strokeWidth="3" />
        <path d="M16 37l7-18h3l7 18" stroke="#fff" strokeWidth="4" /><path d="M16 31h17" stroke="#fff" strokeWidth="4.500" strokeLinecap="round" /><path d="M17 31h10" stroke="#ee6c2e" strokeWidth="2" />
      </S48>
    ),
  },
  {
    name: "Files", dots: 1, icon: (
      <S48>
        <path d="M5 2h38l2 12v28H3V14z" fill="#b9b9b7" /><path d="M5 2h38l1 7H4z" fill="#dcdcda" /><path d="M6 10h36v10H6z" fill="#30302e" />
        <path d="M8 12h33v8H8z" fill="#e27824" /><path d="M8 15h32M8 17.500h32" stroke="#f8e3c8" strokeWidth="1.200" />
        <path d="M4 18h40v24l-1 3H5l-1-3z" fill="#a9a9a7" /><path d="M4 18h40v3H4z" fill="#c6c6c4" />
        <rect x="17" y="27" width="14" height="11" rx="2" fill="#d4d4d2" /><rect x="19.500" y="30" width="9" height="5" fill="#e9e9e7" stroke="#555" strokeWidth="1.500" />
      </S48>
    ),
  },
  {
    name: "Terminal", dots: 1, icon: (
      <S48>
        <rect x="1" y="6" width="46" height="38" rx="1.500" fill="#b9b9b7" /><rect x="2.500" y="7" width="43" height="35" fill="#d8d8d6" /><rect x="5" y="10" width="38" height="30" fill="#2c2c2c" /><path d="M5 10h38v10L5 35z" fill="#3d3d3d" />
        <path d="M10 15l6 5-6 5M18 27h8" stroke="#efefed" strokeWidth="2.500" />
      </S48>
    ),
  },
  {
    name: "Disk Usage", dots: 0, icon: (
      <S48>
        <ellipse cx="24" cy="26" rx="20" ry="17" fill="#8f1c14" /><path d="M24 24h20v3c-2 8-8 13-14 15z" fill="#25598f" /><path d="M21 40v3h10v-3z" fill="#6c9a1d" />
        <ellipse cx="24" cy="21.500" rx="20" ry="17" fill="#e2614c" /><path d="M24 4c12 0 20 8 20 17H24L12 8c3-2 7-4 12-4z" fill="#f08a6a" opacity=".7" />
        <path d="M24 22h20c0 8-6 14-14 16z" fill="#5f93d2" /><path d="M24 22l6 17c-3 1-7 1-10 0z" fill="#b3d335" />
      </S48>
    ),
  },
  { name: "CloudCompare", dots: 1, active: true, icon: <CCLogo size={48} bg="#c9c6c6" sw={2} /> },
];

/* ---------- small parts ---------- */

function Grip({ vertical = false, n = 6, rows = 2 }: { vertical?: boolean; n?: number; rows?: number }) {
  const cells = Array.from({ length: n * rows });
  return (
    <span aria-hidden="true" className={vertical ? (rows === 1 ? "grid grid-cols-1 gap-[2px]" : "grid grid-cols-2 gap-[2px]") : "grid grid-cols-6 gap-[2px]"}>
      {cells.map((_, i) => <i key={i} className="size-px bg-[#b3afa9]" />)}
    </span>
  );
}

const FloatGlyph = ({ kind }: { kind: "float" | "close" | "min" }) => (
  <svg width="11" height="11" viewBox="0 0 11 11" fill="none" stroke="#55534f" aria-hidden="true" className="block">
    <rect x=".5" y=".5" width="10" height="10" rx="2" />
    {kind === "float" && <path d="M4.500 4.500v-2h4v4h-2M2.500 4.500h4v4h-4z" />}
    {kind === "close" && <path d="M3 3l5 5M8 3 3 8" strokeWidth="2" />}
    {kind === "min" && <path d="M3 5.500h5" strokeWidth="2" />}
  </svg>
);

const Caret = () => <svg width="10" height="5" viewBox="0 0 10 5" aria-hidden="true" className="block"><path d="M0 0h10L5 5z" fill="#d8d5ce" /></svg>;

const Panel = ({ title, white = false }: { title: string; white?: boolean }) => (
  <section className="flex flex-1 flex-col" aria-label={title}>
    <header className="flex h-7 items-start pr-1 pl-1">
      <h2 className="leading-5">{title}</h2>
      <button type="button" aria-label={`Float ${title}`} className="mt-1 ml-auto"><FloatGlyph kind="float" /></button>
    </header>
    <div className={white ? "mr-[11px] ml-[9px] flex-1 border border-[#b6b2ac] bg-white" : "mr-[11px] ml-[9px] flex-1 border border-[#b6b2ac]"} />
  </section>
);

const LOG = [
  "[21:36:28] [3D View 1] GL filters available",
  "[21:36:28] [3D View 1] Color ramp shader loaded successfully",
  "[21:36:28] [3D View 1] Stereo mode: not supported",
  "[21:36:28] [ccGLWindow] 3D view initialized",
  "[21:36:28] [Global Shift] Max abs. coord = 1e+4 / max abs. diag = 1e+6",
];

const MENUS: [string, string, string][] = [
  ["", "F", "ile"], ["Edit", "", ""], ["Tools", "", ""], ["", "D", "isplay"], ["Plugins", "", ""], ["3D ", "V", "iews"], ["", "H", "elp"],
];

function TopBar() {
  return (
    <div className="flex h-[27px] shrink-0 items-center bg-linear-to-b/srgb from-[#59564e] to-[#403f3b] font-['Noto_Sans','Noto_Sans_CJK_JP',sans-serif] text-[14px] font-bold text-[#dfdbd2]">
      <div className="flex w-1/2 items-center pl-3">
        <button type="button">Activities</button>
        <button type="button" className="ml-[22px] flex items-center gap-[6px]">
          <CCLogo size={16} bg="#c9cfd2" sw={2.2} />
          CloudCompare
          <Caret />
        </button>
      </div>
      <button type="button" className="pl-[6px]">二 21:37</button>
      <div className="ml-auto flex items-center pr-[15px] font-semibold">
        <svg width="24" height="22" viewBox="0 0 24 22" aria-hidden="true">
          <path d="M7 1l3 4h7l3-4 1 8 2 12H6L7 9z" fill="#eac793" />
          <path d="M7 20c-5 1-6-3-3-5" stroke="#eac793" strokeWidth="2" fill="none" />
          <circle cx="11" cy="9" r=".9" fill="#3b2a1a" /><circle cx="17" cy="9" r=".9" fill="#3b2a1a" /><path d="M12.500 11.500q1.500 1.500 3 0" stroke="#3b2a1a" fill="none" strokeWidth=".8" />
        </svg>
        <span className="ml-[46px] w-5">↓</span>
        <span className="w-20">636.00 B/s</span>
        <span className="w-[17px]">↑</span>
        <span className="w-[100px]">430.00 B/s</span>
        <span className="w-[83px]">CPU：35°C</span>
        <span className="w-[99px]">GPU：34°C</span>
        <button type="button" className="flex items-center gap-[6px]">英<Caret /></button>
        <button type="button" aria-label="System" className="ml-8 flex items-center gap-3">
          <svg width="16" height="15" viewBox="0 0 16 15" aria-hidden="true"><path d="M5 0h6v5H5zM0 10h5v5H0zM11 10h5v5h-5z" fill="#d8d5ce" /><path d="M8 5v3M2.500 10V7.500h11V10" stroke="#d8d5ce" fill="none" /></svg>
          <svg width="16" height="14" viewBox="0 0 16 14" aria-hidden="true"><path d="M0 4h3l4-4v14l-4-4H0z" fill="#d8d5ce" /><path d="M9 4q2 3 0 6M11 2q4 5 0 10M13 1q5 6 0 12" stroke="#d8d5ce" fill="none" strokeWidth="1.200" /></svg>
          <svg width="14" height="15" viewBox="0 0 14 15" aria-hidden="true"><path d="M4 3a6 6 0 1 0 6 0M7 0v7" stroke="#d8d5ce" fill="none" strokeWidth="1.800" /></svg>
          <Caret />
        </button>
      </div>
    </div>
  );
}

export default function App() {
  return (
    <div className="flex h-screen flex-col overflow-hidden bg-[#efebe7] font-['Noto_Sans','Noto_Sans_CJK_SC',sans-serif] text-[14px] text-black">
      <TopBar />
      <div className="flex min-h-0 flex-1">
        <nav aria-label="Dock" className="flex w-[67px] shrink-0 flex-col bg-linear-to-b/srgb from-[#55393d] via-[#47323a] to-[#3e3035] pr-px">
          {DOCK.map((d) => (
            <button key={d.name} type="button" aria-label={d.name} className="relative flex h-16 items-center justify-center">
              <span className="absolute left-[2px] z-10 flex flex-col gap-[3px]">
                {Array.from({ length: d.dots }).map((_, i) => <i key={i} className="size-[6px] rounded-full bg-[#e95420]" />)}
              </span>
              <span className={d.active ? "flex size-[62px] items-center justify-center rounded bg-[#6b5558]" : ""}>{d.icon}</span>
            </button>
          ))}
          <button type="button" aria-label="Show applications" className="mt-auto mb-4 grid grid-cols-3 gap-2 self-center">
            {Array.from({ length: 9 }).map((_, i) => <i key={i} className="size-[6px] rounded-full bg-[#eeeaea]" />)}
          </button>
        </nav>

        <main className="flex min-w-0 flex-1 flex-col">
          <div className="flex h-7 shrink-0 items-center bg-linear-to-b/srgb from-[#3a3935] to-[#4b4a44] font-bold text-[#dfdbd2]">
            <h1 className="flex-1 pl-[61px] text-center text-[15px] leading-6">CloudCompare v2.11.1 (Anoia) [64-bit] - [3D View 1]</h1>
            <div className="flex gap-1 pr-[5px]">
              {["Minimize", "Maximize", "Close"].map((n) => (
                <button key={n} type="button" aria-label={n} className={n === "Close" ? "size-4 rounded-full bg-linear-to-b/srgb from-[#f4754c] to-[#df4a1c]" : "size-4 rounded-full bg-linear-to-b/srgb from-[#84827b] to-[#6a6962]"}>
                  <svg width="16" height="16" viewBox="0 0 16 16" fill="none" stroke="#32312d" aria-hidden="true">
                    {n === "Minimize" && <path d="M4.500 8.500h7" />}
                    {n === "Maximize" && <path d="M4.500 5.500h7v5h-7z" />}
                    {n === "Close" && <path d="M5.500 5.500l5 5M10.500 5.500l-5 5" strokeWidth="1.300" />}
                  </svg>
                </button>
              ))}
            </div>
          </div>

          <div className="flex h-[22px] shrink-0 items-center border-b border-[#d3cfc9] pl-px">
            <CCLogo size={15} bg="#e2e8ea" sw={2.2} />
            <div role="menubar" className="ml-[10px] flex gap-[17px]">
              {MENUS.map(([a, u, b]) => (
                <button key={a + u + b} type="button" role="menuitem" className="leading-5 whitespace-pre">
                  {a}{u && <u className="decoration-2 underline-offset-3 [text-decoration-skip-ink:none]">{u}</u>}{b}
                </button>
              ))}
            </div>
            <div className="ml-auto flex gap-[2px] pr-[2px]">
              {(["min", "float", "close"] as const).map((k) => (
                <button key={k} type="button" aria-label={`${k} view`} className="flex h-[19px] w-[18px] items-center justify-center rounded-[3px] border border-[#b6b2ac] bg-white"><FloatGlyph kind={k} /></button>
              ))}
            </div>
          </div>

          <div role="toolbar" aria-label="Main tools" className="flex h-[38px] shrink-0 items-center border-b border-[#b3afab] bg-linear-to-b/srgb from-[#f8f5f1] to-[#eeeae5]">
            {TOOLBAR.map((n, i) =>
              n === "#handle" ? (
                <span key={i} className={i === 0 ? "flex w-3 shrink-0 justify-center" : "flex w-4 shrink-0 justify-center"}><Grip vertical /></span>
              ) : n === "#sep" ? (
                <span key={i} className="flex w-[7px] shrink-0 justify-center"><i className="h-[19px] w-px bg-[#d6d2cc]" /></span>
              ) : (
                <button key={i} type="button" aria-label={n} className="flex h-8 w-[33px] shrink-0 items-center justify-center">{I[n]}</button>
              ),
            )}
          </div>

          <div className="flex min-h-0 flex-1 pt-px">
            <div role="toolbar" aria-label="View tools" className="flex w-10 shrink-0 flex-col items-center border-r border-[#b3afab] bg-linear-to-r/srgb from-[#f8f5f0] to-[#eeeae5]">
              <span className="flex h-3 items-center pt-1"><Grip /></span>
              {LEFT.map(([n, icon]) => (
                <button key={n} type="button" aria-label={n} aria-pressed={n.startsWith("Auto")} className={n.startsWith("Auto") ? "my-px flex h-[30px] w-8 items-center justify-center rounded-[3px] border border-[#b0aca6] bg-[#dcd8d4]" : "relative flex h-8 w-8 items-center justify-center"}>
                  {icon}
                  {(n === "Render mode" || n === "Pivot visibility") && <svg width="6" height="3" viewBox="0 0 6 3" aria-hidden="true" className="absolute right-[2px] bottom-[5px]"><path d="M0 0h6L3 3z" fill="#4a4845" /></svg>}
                </button>
              ))}
            </div>

            <div className="flex min-w-0 flex-1 flex-col">
              <div className="flex min-h-0 flex-1">
                <div className="flex w-[280px] shrink-0 items-center">
                  <div className="flex flex-1 flex-col self-stretch pb-[9px]">
                    <Panel title="DB Tree" white />
                    <div className="flex h-[15px] items-center justify-center pt-2"><Grip rows={1} /></div>
                    <Panel title="Properties" />
                  </div>
                  <div className="w-1"><Grip vertical rows={1} /></div>
                </div>

                <section aria-label="3D View 1" className="relative flex flex-1 items-center justify-center bg-linear-to-b/srgb from-[#0a6697] to-black text-[13px] text-white">
                  <svg width="20" height="20" viewBox="0 0 20 20" aria-hidden="true"><path d="M10.500 0v20M0 10.500h20" stroke="#d9dfe2" /></svg>
                  <div className="absolute inset-x-0 bottom-[5px] flex items-end pr-[9px] pl-2 leading-5">
                    <div className="flex-1">
                      <p>New size = 1446 * 799 (px)</p>
                      <p>Perspective OFF</p>
                    </div>
                    <div className="flex w-[351px] flex-col items-center">
                      <div className="flex h-[6px] w-full items-center border-x border-white"><i className="h-px w-full bg-white" /></div>
                      <p className="mt-[2px]">350</p>
                    </div>
                    <i className="mb-6 ml-[34px] size-[27px] border-b-2 border-l-2 border-b-[#ff0000] border-l-[#00ff00]" />
                  </div>
                </section>
              </div>

              <section aria-label="Console" className="flex h-[143px] shrink-0 flex-col pr-[9px] pb-[9px] pl-[9px]">
                <header className="-mr-[7px] -ml-[5px] flex h-[34px] items-start pt-[6px]">
                  <h2 className="leading-5">Console</h2>
                  <div className="mt-1 ml-auto flex gap-[3px]">
                    <button type="button" aria-label="Float Console"><FloatGlyph kind="float" /></button>
                    <button type="button" aria-label="Close Console"><FloatGlyph kind="close" /></button>
                  </div>
                </header>
                <div className="flex flex-1 border border-[#b6b2ac] bg-white">
                  <ul className="flex-1">
                    {LOG.map((l) => <li key={l} className="pl-[3px] leading-[17px] even:bg-[#f5f4f2]">{l}</li>)}
                  </ul>
                  <div className="flex w-[14px] flex-col border-l border-[#b6b2ac]">
                    <button type="button" aria-label="Scroll up" className="flex h-[13px] items-center justify-center"><svg width="8" height="4" viewBox="0 0 8 4" aria-hidden="true"><path d="M0 4h8L4 0z" fill="#55534f" /></svg></button>
                    <div className="flex-1 border-y border-[#b6b2ac] bg-[#e3e1dd]" />
                    <div className="h-[26px] bg-linear-to-r/srgb from-white to-[#f0eeeb]" />
                    <button type="button" aria-label="Scroll down" className="flex h-[14px] items-center justify-center border-t border-[#b6b2ac]"><svg width="8" height="4" viewBox="0 0 8 4" aria-hidden="true"><path d="M0 0h8L4 4z" fill="#55534f" /></svg></button>
                  </div>
                </div>
              </section>
            </div>

            <div role="toolbar" aria-label="Plugins" className="flex w-[87px] shrink-0 flex-col items-center border-l border-[#b3afab] bg-linear-to-r/srgb from-[#f8f5f0] to-[#eeeae5] pr-[2px]">
              <span className="flex h-3 items-center pt-1"><Grip /></span>
              {RIGHT_A.map(([n, icon]) => <button key={n} type="button" aria-label={n} className="flex h-8 items-center justify-center">{icon}</button>)}
              <span className="flex h-4 items-center pt-1"><Grip /></span>
              {RIGHT_B.map(([n, icon]) => <button key={n} type="button" aria-label={n} className={n === "CSF Filter" ? "flex h-[26px] items-center justify-center" : "flex h-8 items-center justify-center"}>{icon}</button>)}
            </div>
          </div>

          <footer className="flex h-[22px] shrink-0 items-center justify-between pr-[15px] pl-[6px]">
            <span>Ready</span>
            <span className="-mt-4 font-['Liberation_Sans',sans-serif] text-[18px] text-[#9b9995] [text-shadow:1px_1px_0_#fff]">CSDN @Hello_World_HYC</span>
          </footer>
        </main>
      </div>
    </div>
  );
}
